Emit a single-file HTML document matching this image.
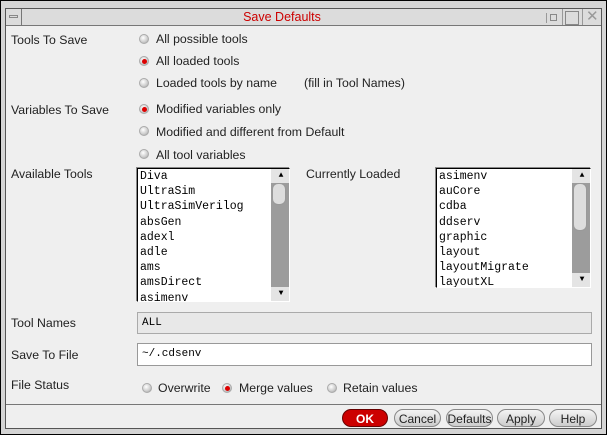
<!DOCTYPE html><html><head><style>
body{margin:0;width:607px;height:435px;background:#000;position:relative;overflow:hidden;font-family:"Liberation Sans",sans-serif;font-size:12.3px;color:#222}
.a{position:absolute}
.rad{position:absolute;width:10px;height:10px;border-radius:50%;background:radial-gradient(circle at 40% 35%,#fff,#ccc 60%,#999);border:1px solid #aaa;box-sizing:border-box}
.rad.on::after{content:"";position:absolute;left:2px;top:2px;width:5px;height:5px;border-radius:50%;background:#d00}
.list{position:absolute;background:#fff;border:1px solid #000;border-right-color:#fff;border-bottom-color:#fff;font-family:"Liberation Mono",monospace;font-size:11.5px;line-height:15.2px;overflow:hidden;box-shadow:-1px -1px 0 #888}
.list div{padding-left:2px;color:#000}
.sb{position:absolute;top:0;right:0;width:16px;bottom:0;background:#9c9c9c}
.ar{position:absolute;left:0;width:16px;height:14px;background:#e4e4e4;color:#fff;font-size:8px;text-align:center;line-height:14px}
.th{position:absolute;left:1px;width:14px;background:#ddd;border-radius:6px;border:1px solid #999;box-sizing:border-box}
.btn{position:absolute;top:409px;height:18px;border:1px solid #888;border-radius:9px;background:linear-gradient(#f4f4f4,#ccc);text-align:center;line-height:18px;font-size:12px;box-sizing:border-box}
</style></head><body>
<div class="a" style="left:1px;top:1px;width:605px;height:433px;background:#d4d4d4"></div>
<div class="a" style="left:5px;top:8px;width:597px;height:421px;background:#efefef;border:1px solid #555;box-sizing:border-box"></div>
<div class="a" style="left:6px;top:9px;width:595px;height:16px;background:#dcdcdc;border-bottom:1px solid #777"></div>
<div class="a" style="left:21px;top:9px;width:1px;height:16px;background:#777"></div>
<div class="a" style="left:9px;top:15px;width:9px;height:3px;border:1px solid #888;box-sizing:border-box"></div>
<div class="a" style="left:22px;top:9px;width:520px;text-align:center;color:#c00;font-size:12.5px;line-height:16px">Save Defaults</div>
<div class="a" style="left:546px;top:13px;width:1px;height:10px;background:#999"></div>
<div class="a" style="left:562px;top:9px;width:1px;height:16px;background:#999"></div>
<div class="a" style="left:582px;top:9px;width:1px;height:16px;background:#999"></div>
<div class="a" style="left:550px;top:14px;width:5px;height:5px;border:1px solid #888"></div>
<div class="a" style="left:565px;top:11px;width:12px;height:12px;border:1px solid #888"></div>
<div class="a" style="left:586px;top:9px;width:12px;font-size:15px;color:#999;line-height:16px">✕</div>

<div class="a" style="left:11px;top:33px">Tools To Save</div>
<div class="rad" style="left:139px;top:34px"></div><div class="a" style="left:156px;top:32px">All possible tools</div>
<div class="rad on" style="left:139px;top:56px"></div><div class="a" style="left:156px;top:54px">All loaded tools</div>
<div class="rad" style="left:139px;top:78px"></div><div class="a" style="left:156px;top:76px">Loaded tools by name</div>
<div class="a" style="left:304px;top:76px">(fill in Tool Names)</div>

<div class="a" style="left:11px;top:103px">Variables To Save</div>
<div class="rad on" style="left:139px;top:104px"></div><div class="a" style="left:156px;top:102px">Modified variables only</div>
<div class="rad" style="left:139px;top:126px"></div><div class="a" style="left:156px;top:125px">Modified and different from Default</div>
<div class="rad" style="left:139px;top:149px"></div><div class="a" style="left:156px;top:148px">All tool variables</div>

<div class="a" style="left:11px;top:167px">Available Tools</div>
<div class="list" style="left:137px;top:168px;width:151px;height:132px">
<div>Diva</div><div>UltraSim</div><div>UltraSimVerilog</div><div>absGen</div><div>adexl</div><div>adle</div><div>ams</div><div>amsDirect</div><div>asimenv</div>
<div class="sb"><div class="ar" style="top:0">▲</div><div class="th" style="top:14px;height:22px"></div><div class="ar" style="bottom:0">▼</div></div></div>
<div class="a" style="left:306px;top:167px">Currently Loaded</div>
<div class="list" style="left:436px;top:168px;width:153px;height:118px">
<div>asimenv</div><div>auCore</div><div>cdba</div><div>ddserv</div><div>graphic</div><div>layout</div><div>layoutMigrate</div><div>layoutXL</div>
<div class="sb"><div class="ar" style="top:0">▲</div><div class="th" style="top:14px;height:48px"></div><div class="ar" style="bottom:0">▼</div></div></div>

<div class="a" style="left:11px;top:316px">Tool Names</div>
<div class="a" style="left:137px;top:312px;width:455px;height:22px;background:#e8e8e8;border:1px solid #aaa;box-sizing:border-box;font-family:'Liberation Mono',monospace;font-size:11px;line-height:20px;padding-left:4px;color:#000">ALL</div>
<div class="a" style="left:11px;top:348px">Save To File</div>
<div class="a" style="left:137px;top:343px;width:455px;height:23px;background:#fff;border:1px solid #999;box-sizing:border-box;font-family:'Liberation Mono',monospace;font-size:11px;line-height:21px;padding-left:4px;color:#000">~/.cdsenv</div>

<div class="a" style="left:11px;top:378px">File Status</div>
<div class="rad" style="left:142px;top:383px"></div><div class="a" style="left:158px;top:381px">Overwrite</div>
<div class="rad on" style="left:222px;top:383px"></div><div class="a" style="left:239px;top:381px">Merge values</div>
<div class="rad" style="left:327px;top:383px"></div><div class="a" style="left:343px;top:381px">Retain values</div>

<div class="a" style="left:6px;top:404px;width:595px;height:1px;background:#777"></div>
<div class="btn" style="left:342px;width:46px;background:#c00;color:#fff;font-weight:bold;border-color:#600">OK</div>
<div class="btn" style="left:394px;width:47px">Cancel</div>
<div class="btn" style="left:446px;width:47px">Defaults</div>
<div class="btn" style="left:497px;width:48px">Apply</div>
<div class="btn" style="left:549px;width:48px">Help</div>
</body></html>
